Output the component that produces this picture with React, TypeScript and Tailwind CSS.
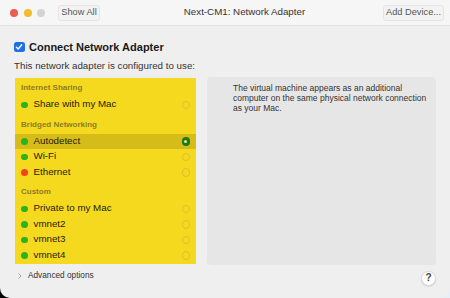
import React from 'react';

type Row = { label: string; dot: 'green' | 'red'; selected?: boolean };

const sections: { title: string; rows: Row[] }[] = [
  { title: 'Internet Sharing', rows: [{ label: 'Share with my Mac', dot: 'green' }] },
  {
    title: 'Bridged Networking',
    rows: [
      { label: 'Autodetect', dot: 'green', selected: true },
      { label: 'Wi-Fi', dot: 'green' },
      { label: 'Ethernet', dot: 'red' },
    ],
  },
  {
    title: 'Custom',
    rows: [
      { label: 'Private to my Mac', dot: 'green' },
      { label: 'vmnet2', dot: 'green' },
      { label: 'vmnet3', dot: 'green' },
      { label: 'vmnet4', dot: 'green' },
    ],
  },
];

const NetworkRow: React.FC<{ row: Row }> = ({ row }) => (
  <div
    className={`flex items-center h-[15.5px] pl-[6px] pr-[6px] ${
      row.selected ? 'bg-[#d6bc18]' : ''
    }`}
  >
    <span
      className={`w-[6.5px] h-[6.5px] rounded-full ${
        row.dot === 'green' ? 'bg-[#2bb21d]' : 'bg-[#f2431d]'
      }`}
    />
    <span className="ml-[6px] text-[9.75px] text-[#1d1a08] flex-1">{row.label}</span>
    {row.selected ? (
      <span className="w-[8.5px] h-[8.5px] rounded-full bg-[#177a22] flex items-center justify-center">
        <span className="w-[3px] h-[3px] rounded-full bg-[#f3e36a]" />
      </span>
    ) : (
      <span className="w-[8.5px] h-[8.5px] rounded-full border border-[#dcc12c]" />
    )}
  </div>
);

export default function App() {
  return (
    <div className="w-[450px] h-[298px] bg-[linear-gradient(90deg,#000_0%,#000_50%,#e8eef6_50%)] font-['Liberation_Sans',Arial,sans-serif]">
      <div className="w-full h-full bg-[#efefef] rounded-b-[10px] flex flex-col overflow-hidden">
        {/* Title bar */}
        <div className="h-[26px] bg-[#f6f6f6] border-b border-[#e2e2e2] flex items-center shrink-0">
          <div className="flex items-center gap-[5.5px] pl-[10px]">
            <span className="w-[8px] h-[8px] rounded-full bg-[#ee5b53]" />
            <span className="w-[8px] h-[8px] rounded-full bg-[#f6bb2f]" />
            <span className="w-[8px] h-[8px] rounded-full bg-[#d3d3d3]" />
          </div>
          <button className="ml-[13px] w-[42px] h-[16px] rounded-[3px] bg-[#f3f3f3] border border-[#e4e4e4] text-[9.25px] text-[#555] leading-none">
            Show All
          </button>
          <div className="flex-1 text-center text-[9.75px] text-[#333] pl-[6px]">
            Next-CM1: Network Adapter
          </div>
          <button className="mr-[6px] w-[61px] h-[16px] rounded-[3px] bg-[#f3f3f3] border border-[#e4e4e4] text-[9.25px] text-[#555] leading-none">
            Add Device...
          </button>
        </div>

        {/* Content */}
        <div className="flex-1 flex flex-col px-[14px]">
          <label className="flex items-center mt-[15px] h-[12px]">
            <span className="w-[10.5px] h-[10.5px] rounded-[2.5px] bg-[#1f6fe9] flex items-center justify-center">
              <svg width="8" height="8" viewBox="0 0 8 8">
                <path d="M1.4 4.2 L3.2 6 L6.7 1.8" stroke="white" strokeWidth="1.4" fill="none" strokeLinecap="round" strokeLinejoin="round" />
              </svg>
            </span>
            <span className="ml-[4.5px] text-[11px] font-bold text-[#1a1a1a]">Connect Network Adapter</span>
          </label>
          <div className="mt-[7px] text-[9.75px] leading-[12px] text-[#333]">This network adapter is configured to use:</div>

          <div className="flex mt-[6px] gap-[11px]">
            <div className="w-[181px] h-[186px] ml-[1px] bg-[#f5d91f] pt-[2px]">
              {sections.map((s) => (
                <div key={s.title} className="mb-[4px]">
                  <div className="h-[16px] flex items-center pl-[6px] text-[8px] font-bold text-[#8d7c22]">{s.title}</div>
                  <div className="mt-[1px]">
                    {s.rows.map((r) => (
                      <NetworkRow key={r.label} row={r} />
                    ))}
                  </div>
                </div>
              ))}
            </div>
            <div className="w-[229px] h-[188px] -mt-[1px] bg-[#e6e6e6] rounded-[4px] pl-[26px] pr-[6px] pt-[6px] text-[8.5px] leading-[10px] text-[#333]">
              The virtual machine appears as an additional computer on the same physical network connection as your Mac.
            </div>
          </div>

          <div className="flex items-center mt-[4px] h-[18px]">
            <div className="flex items-center -mt-[4px]">
              <svg width="8" height="8" viewBox="0 0 8 8" className="ml-[2px]">
                <path d="M2.5 1.5 L5 4 L2.5 6.5" stroke="#a0a0a0" strokeWidth="1" fill="none" />
              </svg>
              <span className="ml-[4px] text-[8.25px] text-[#333]">Advanced options</span>
            </div>
            <div className="flex-1" />
            <button className="w-[15px] h-[15px] rounded-full bg-white border border-[#dcdcdc] shadow-[0_0.5px_1px_rgba(0,0,0,0.2)] flex items-center justify-center text-[10px] font-bold text-[#444] leading-none">
              ?
            </button>
          </div>
        </div>
      </div>
    </div>
  );
}
